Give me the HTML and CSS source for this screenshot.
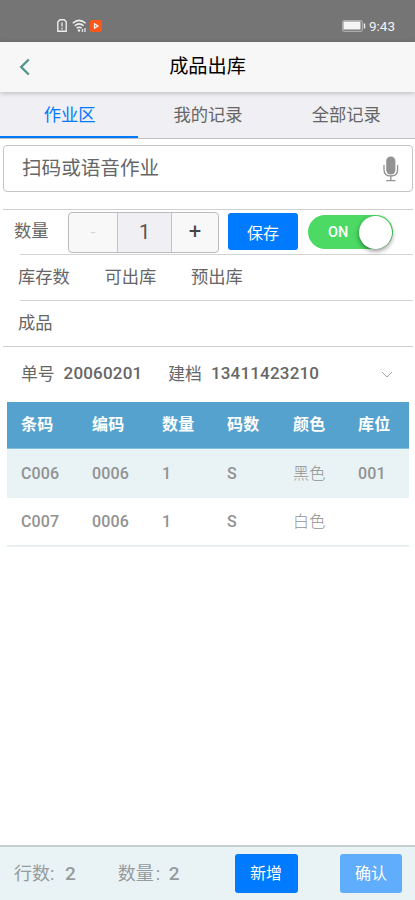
FILE: index.html
```html
<!DOCTYPE html>
<html lang="zh-CN">
<head>
<meta charset="utf-8">
<meta name="viewport" content="width=device-width, initial-scale=1">
<title>成品出库</title>
<link rel="stylesheet" href="styles.css">
</head>
<body>
<div class="app">
  <div class="status">
    <svg class="sim" viewBox="0 0 10 13"><path d="M3 .8h4.2l2 2V12.2H.8V3z" fill="none" stroke="#eee" stroke-width="1.4"/><path d="M5 3.5v4M5 8.8v1.6" stroke="#ddd" stroke-width="1.5"/></svg>
    <svg class="wifi" viewBox="0 0 15 14"><g fill="none" stroke="#eee" stroke-width="1.5"><path d="M.7 4.2Q7 -1.5 13.6 4.2M2.7 6.8Q7.2 3 11.6 6.8M4.7 9.2Q7.2 7.2 9.6 9.2"/></g><circle cx="7" cy="11.5" r="1.2" fill="#eee"/><path d="M10.5 10v3M13 9v4" stroke="#ddd" stroke-width="1.4"/></svg>
    <svg class="play" viewBox="0 0 12 12"><rect width="12" height="12" rx="2" fill="#fa5718"/><path d="M4.5 3.8 8 6l-3.5 2.2z" fill="none" stroke="#fff" stroke-width="1.2"/></svg>
    <svg class="battery" viewBox="0 0 24 12"><rect x=".7" y=".7" width="19.6" height="10.6" rx="1" fill="none" stroke="#bbb"/><rect x="1.5" y="1.5" width="17" height="8" fill="#f4f4f4"/><path d="M22.5 3.5v5" stroke="#eee" stroke-width="1.4"/></svg>
    <span class="time">9:43</span>
  </div>
  <header class="header">
    <svg class="back" viewBox="0 0 12 18"><path d="M9.8 1.5 2.2 9l7.6 7.5" fill="none" stroke="#55958b" stroke-width="2.4"/></svg>
    <h1>成品出库</h1>
  </header>
  <nav class="tabs">
    <a class="tab active">作业区</a><a class="tab">我的记录</a><a class="tab">全部记录</a>
  </nav>
  <div class="scan">
    <span>扫码或语音作业</span>
    <svg class="mic" viewBox="0 0 16 26"><rect x="3.2" y=".5" width="9.2" height="18" rx="4.6" fill="#929292"/><path d="M1 9v4.5Q1 20 7.8 20t6.8-6.5V9M7.8 20v4.5M3.2 24.7h9.2" fill="none" stroke="#929292" stroke-width="1.3"/></svg>
  </div>
  <section class="panel">
    <div class="qty">
      <span class="qty-label">数量</span>
      <div class="stepper"><span class="minus">-</span><span class="value">1</span><span class="plus">+</span></div>
      <button class="btn save">保存</button>
      <div class="switch"><span>ON</span><i></i></div>
    </div>
    <div class="line stock"><span>库存数</span><span>可出库</span><span>预出库</span></div>
    <div class="line product"><span>成品</span></div>
  </section>
  <div class="order">
    <span>单号</span><b class="number">20060201</b><span class="creator">建档</span><b class="number">13411423210</b>
    <svg class="chevron" viewBox="0 0 12 7"><path d="M1 1l5 5 5-5" fill="none" stroke="#999" stroke-width=".9"/></svg>
  </div>
  <div class="table">
    <div class="tr th"><span>条码</span><span>编码</span><span>数量</span><span>码数</span><span>颜色</span><span>库位</span></div>
    <div class="tr odd"><span>C006</span><span>0006</span><span>1</span><span>S</span><span class="color">黑色</span><span>001</span></div>
    <div class="tr even"><span>C007</span><span>0006</span><span>1</span><span>S</span><span class="color">白色</span><span></span></div>
  </div>
  <footer class="footer">
    <span class="rows">行数:</span><b>2</b>
    <span class="total">数量<i>:</i></span><b>2</b>
    <button class="btn add">新增</button>
    <button class="btn confirm">确认</button>
  </footer>
</div>
</body>
</html>
```
FILE: styles.css
```css
* { box-sizing: border-box; }
body {
  margin: 0;
  background: #fff;
  font-family: Roboto, "Noto Sans CJK SC", sans-serif;
  font-size: 17.3px;
  font-weight: 400;
  color: #666;
}
svg { display: block; flex: none; }
span, b, a, button { white-space: nowrap; }
.app { display: flex; flex-direction: column; height: 900px; overflow: hidden; }
.status { height: 42px; flex: none; background: #757575; display: flex; align-items: center; padding: 9px 19px 0 57px; }
.sim { width: 10px; height: 13px; }
.wifi { width: 15px; height: 14px; margin-left: 5px; }
.play { width: 12px; height: 12px; margin-left: 3px; }
.battery { width: 24px; height: 12px; margin-left: auto; }
.time { width: 27px; margin-left: 3px; font-size: 13.5px; line-height: 16px; color: #f2f2f2; }
.header { height: 50px; flex: none; background: #f7f7f7; display: flex; align-items: center; position: relative; box-shadow: 0 1px 5px rgba(0,0,0,.24); padding: 0 31px 0 19px; }
.back { width: 12px; height: 18px; }
.header h1 { margin: 0; flex: 1; text-align: center; font-size: 19.2px; line-height: 28px; font-weight: 400; color: #000; }
.tabs { height: 47px; flex: none; display: grid; grid-template-columns: repeat(3, 1fr); background: #efeff4; border-bottom: 1px solid #c2c2c5; }
.tab { display: flex; justify-content: center; align-items: center; padding: 0 0 4px 1px; }
.tab.active { color: #007aff; border-bottom: 2px solid #007aff; padding-bottom: 2px; }
.scan { height: 47px; flex: none; margin: 6px 2px 0 3px; border: 1px solid #c4c4c4; border-radius: 4px; display: flex; align-items: center; justify-content: space-between; padding: 0 13px 2px 18px; font-size: 19.6px; }
.scan span { padding-bottom: 2px; }
.mic { width: 16px; height: 26px; margin-top: 2px; }
.panel { margin: 17px 2px 0 3px; flex: none; border-top: 1px solid #d0d0d0; border-bottom: 1px solid #d0d0d0; }
.qty { height: 44px; display: flex; align-items: center; padding-left: 11px; }
.qty-label { width: 54px; padding-bottom: 5px; }
.stepper { width: 151px; height: 41px; border: 1px solid #bbb; border-radius: 4px; display: grid; grid-template-columns: 48px 55px 1fr; background: #f8f8f8; overflow: hidden; }
.stepper span { display: flex; align-items: center; justify-content: center; padding-bottom: 1px; }
.stepper .minus { color: #d4d4d8; font-size: 17px; }
.stepper .value { background: #efeff4; border-left: 1px solid #c3c3c3; border-right: 1px solid #c3c3c3; font-size: 20px; color: #555; }
.stepper .plus { font-size: 22px; color: #444; }
.btn { border: 0; border-radius: 3px; padding: 0 0 3px; background: #007aff; color: #fff; font: 400 16px Roboto, "Noto Sans CJK SC", sans-serif; }
.save { width: 70px; height: 37px; margin: -1px 0 0 9px; padding: 1px 0 0; }
.switch { width: 85px; height: 34px; margin: 0 0 0 10px; border-radius: 17px; background: #4cd964; display: flex; align-items: center; justify-content: space-between; padding: 0 1px 0 20px; color: #fff; font-size: 14.5px; font-weight: 500; }
.switch i { width: 33px; height: 33px; border-radius: 50%; background: #fff; box-shadow: 0 2px 5px rgba(0,0,0,.45); }
.line { height: 46px; margin-left: 17px; border-top: 1px solid #d4d4d4; display: flex; align-items: center; padding-bottom: 4px; }
.line span { margin-left: -2px; }
.stock { gap: 36.6px; }
.order { height: 55px; flex: none; display: flex; align-items: center; padding: 0 22px 3px 21px; font-size: 16.8px; }
.order span { padding-bottom: 1px; }
.number { font-weight: 500; font-size: 17px; letter-spacing: .18px; margin-left: 9px; }
.order .creator { margin-left: 26px; }
.chevron { width: 12px; height: 7px; margin-left: auto; margin-top: 3px; }
.table { margin: 0 6px 0 7px; flex: none; }
.tr { display: grid; grid-template-columns: 71px 70px 65px 66px 65px 1fr; align-items: center; padding-left: 14px; font-size: 16px; color: #929292; font-weight: 500; height: 49px; letter-spacing: .15px; }
.th { height: 47px; background: #56a2ce; color: #fff; font-weight: 700; border-bottom: 1px solid #85bfdf; padding-bottom: 4px; }
.odd { background: #e9f2f5; }
.even { border-bottom: 2px solid #e7eff1; }
.color { font-weight: 300; padding-bottom: 4px; }
.footer { height: 55px; flex: none; margin-top: auto; background: #e9f2f5; border-top: 2px solid #c9cecf; display: flex; align-items: center; padding: 0 13px 0 14px; font-size: 18px; color: #969b9c; }
.footer b { font-weight: 500; font-size: 19px; }
.footer span { padding-bottom: 4px; }
.total i { font-style: normal; margin-left: 2px; }
.rows { width: 51px; }
.total { width: 51px; margin-left: 42px; }
.add { width: 63px; height: 39px; margin-left: 55px; }
.confirm { width: 62px; height: 39px; margin-left: auto; background: #5fadfb; }
```
